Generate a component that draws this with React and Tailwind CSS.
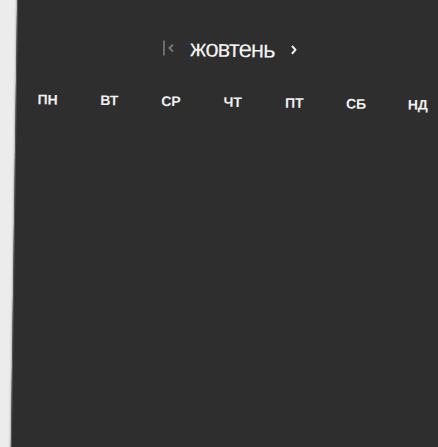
import React from 'react';

const days = ['ПН', 'ВТ', 'СР', 'ЧТ', 'ПТ', 'СБ', 'НД'];

const App = () => {
  return (
    <div className="w-[438px] h-[447px] overflow-hidden bg-[#ececec] font-['Liberation_Sans',Arial,sans-serif]">
      {/* calendar panel, slightly tilted as in the photo */}
      <div className="ml-[14px] -mt-[20px] w-[440px] h-[490px] bg-[#2e2e2e] rotate-[0.8deg] border-l border-[#555] shadow-[-1px_0_2px_rgba(0,0,0,0.25)]">
        <div className="pt-[55px] flex items-center justify-center pr-[14px]">
          <button className="flex items-center text-[#7c7c7c]">
            <svg width="12" height="16" viewBox="0 0 12 16" fill="none" stroke="currentColor">
              <path d="M1.5 0.5v15" strokeWidth="1.6" />
              <path d="M10.5 4.5L7 8L10.5 11.5" strokeWidth="1.8" />
            </svg>
          </button>
          <span className="ml-[16px] mr-[15px] text-[24px] leading-[28px] tracking-[-1px] text-[#f2f2f2]">жовтень</span>
          <button className="flex items-center text-[#f2f2f2]">
            <svg width="8" height="14" viewBox="0 0 8 14" fill="none" stroke="currentColor" strokeWidth="2">
              <path d="M2.5 3L6 7L2.5 11" />
            </svg>
          </button>
        </div>
        <div className="mt-[30px] w-[432px] grid grid-cols-7">
          {days.map((d) => (
            <div key={d} className="text-center text-[14px] font-bold text-[#f0f0f0] leading-[18px]">
              {d}
            </div>
          ))}
        </div>
      </div>
    </div>
  );
};

export default App;
